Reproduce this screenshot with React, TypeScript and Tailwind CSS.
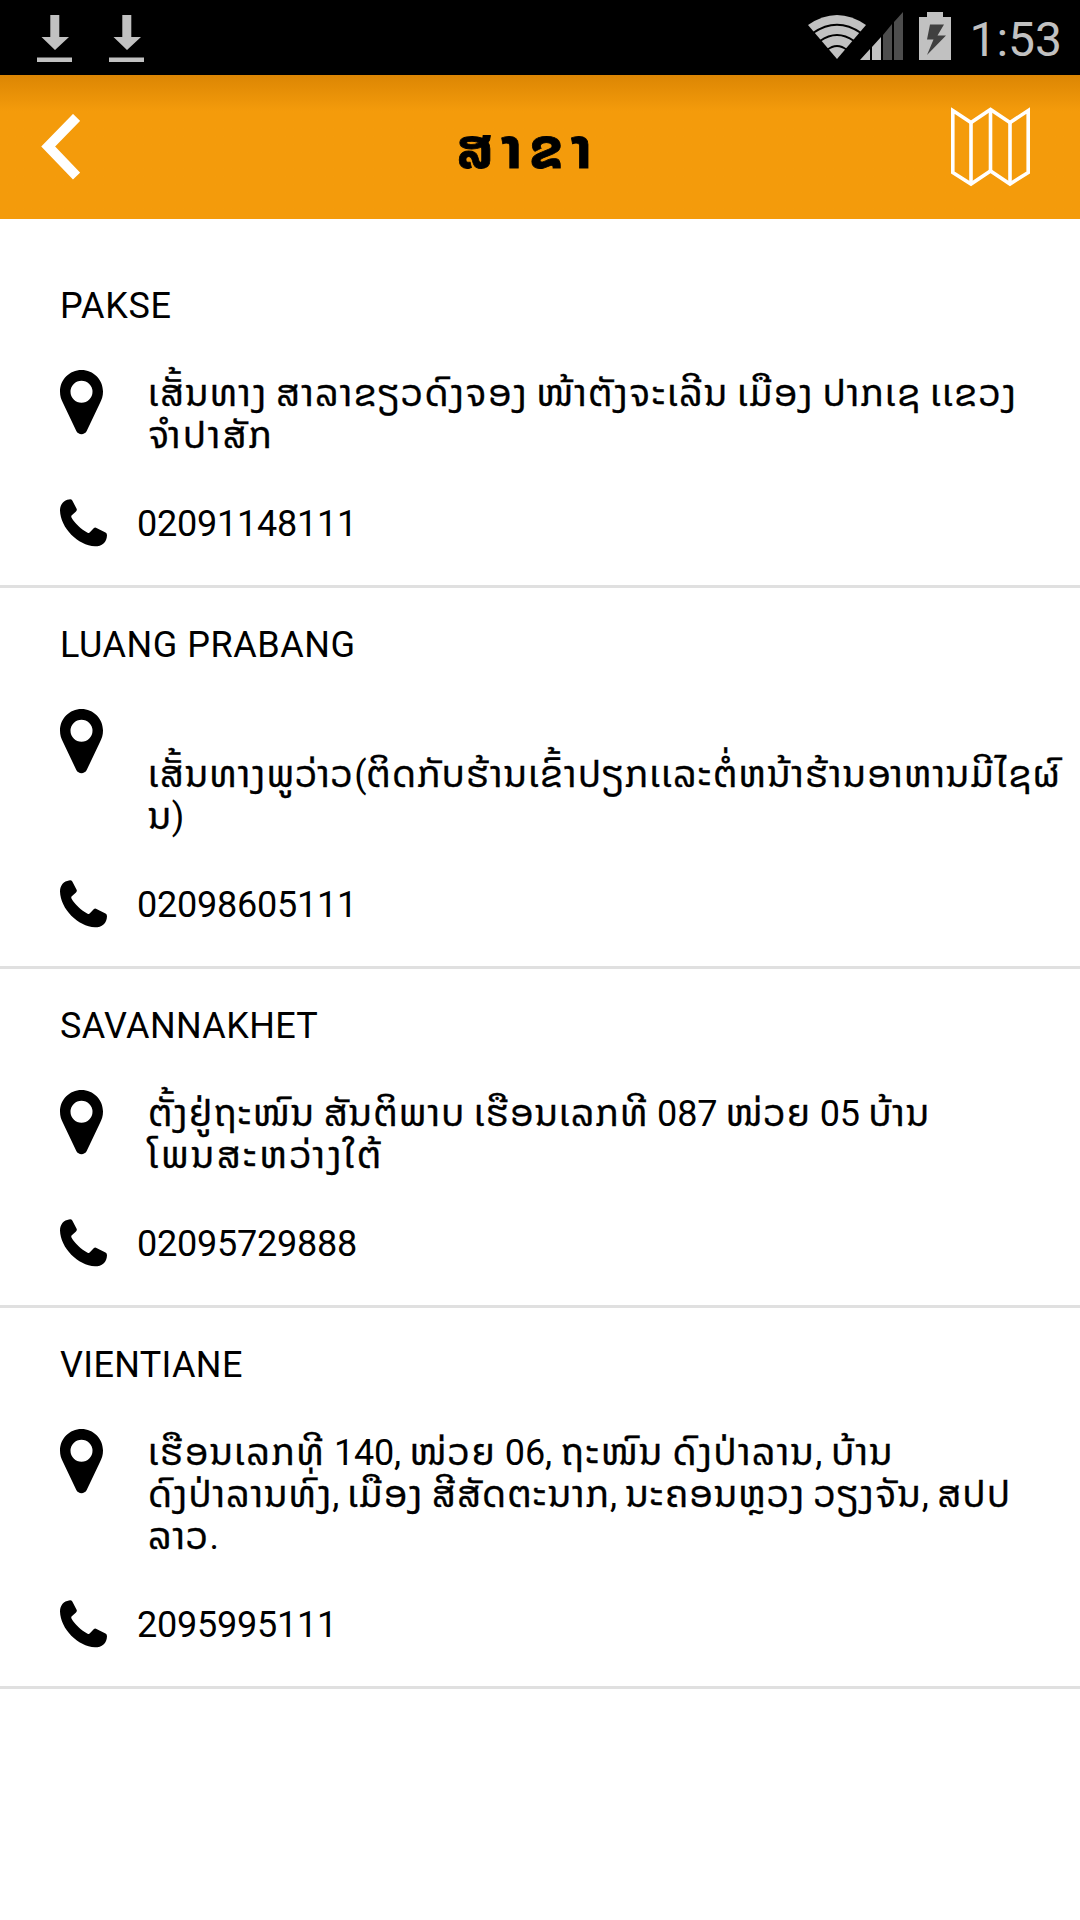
import { clsx } from "clsx";

type Line = { text: string; tracking?: string };

type Branch = {
  name: string;
  nameTracking: string;
  address: Line[];
  phone: string;
};

const branches: Branch[] = [
  {
    name: "PAKSE",
    nameTracking: "tracking-[0.7px]",
    address: [
      { text: "ເສັ້ນທາງ ສາລາຂຽວດົງຈອງ ໜ້າຕັງຈະເລີນ ເມືອງ ປາກເຊ ເເຂວງ", tracking: "tracking-[1.22px]" },
      { text: "ຈຳປາສັກ", tracking: "tracking-[2px]" },
    ],
    phone: "02091148111",
  },
  {
    name: "LUANG PRABANG",
    nameTracking: "tracking-[0.55px]",
    address: [
      { text: "" },
      { text: "ເສັ້ນທາງພູວ່າວ(ຕິດກັບຮ້ານເຂົ້າປຽກເເລະຕໍ່ຫນ້າຮ້ານອາຫານມີໄຊຜົ", tracking: "tracking-[1.06px]" },
      { text: "ນ)", tracking: "tracking-[0.5px]" },
    ],
    phone: "02098605111",
  },
  {
    name: "SAVANNAKHET",
    nameTracking: "tracking-[0.37px]",
    address: [
      { text: "ຕັ້ງຢູ່ຖະໜົນ ສັນຕິພາບ ເຮືອນເລກທີ 087 ໜ່ວຍ 05 ບ້ານ", tracking: "tracking-[1.05px]" },
      { text: "ໂພນສະຫວ່າງໃຕ້", tracking: "tracking-[2.3px]" },
    ],
    phone: "02095729888",
  },
  {
    name: "VIENTIANE",
    nameTracking: "tracking-[0.35px]",
    address: [
      { text: "ເຮືອນເລກທີ 140, ໜ່ວຍ 06, ຖະໜົນ ດົງປ່າລານ, ບ້ານ", tracking: "tracking-[1.35px]" },
      { text: "ດົງປ່າລານທົ່ງ, ເມືອງ ສີສັດຕະນາກ, ນະຄອນຫຼວງ ວຽງຈັນ, ສປປ", tracking: "tracking-[1.03px]" },
      { text: "ລາວ.", tracking: "tracking-[1px]" },
    ],
    phone: "2095995111",
  },
];

const DownloadIcon = () => (
  <svg width="36" height="48" viewBox="0 0 36 48" fill="#c1c1c1">
    <path d="M13.3 0H22.3V22H32L18 35L4.500 22H13.300Z" />
    <path d="M0 42.500H35V47H0Z" />
  </svg>
);

const WifiIcon = () => (
  <svg width="58" height="44" viewBox="0 0 58 44">
    <path d="M0 10Q29 -10 58 10L29 44Z" fill="#c1c1c1" />
    <g fill="none" stroke="#000" strokeWidth="2">
      <path d="M5 18Q29 1.500 53 18" />
      <path d="M12 26Q29 14 46 26" />
      <path d="M19 35Q29 27 39 35" />
    </g>
  </svg>
);

const SignalIcon = () => (
  <svg width="43" height="48" viewBox="0 0 43 48">
    <path d="M0 48L10 37V48ZM12 35L21 25V48H12Z" fill="#c1c1c1" />
    <path d="M23 23L32 12V48H23ZM34 10L43 0V48H34Z" fill="#4d4d4d" />
  </svg>
);

const BatteryIcon = () => (
  <svg width="32" height="48" viewBox="0 0 32 48">
    <path d="M8 0H24V5H32V48H0V5H8Z" fill="#c1c1c1" />
    <path d="M11 12.500H25L18.500 23.500H27L8 43L14.500 27.500H8Z" fill="#404040" />
  </svg>
);

const BackIcon = () => (
  <svg width="40" height="66" viewBox="0 0 40 66" fill="none" stroke="#fff" strokeWidth="10">
    <path d="M36.600 3.400L8.200 32.500L36.600 62.100" />
  </svg>
);

const MapIcon = () => (
  <svg width="79" height="80" viewBox="0 0 79 80" fill="none" stroke="#fff" strokeWidth="3.600">
    <path d="M1.800 3.500L20 15.500L39.500 2.500L59 15.500L77.200 3.500V65.500L59 77L39.500 64L20 77L1.800 65.500Z" />
    <path d="M20 15.500V77M39.500 2.500V64M59 15.500V77" />
  </svg>
);

const PinIcon = () => (
  <svg className="block" width="43" height="65" viewBox="0 0 43 65">
    <path
      fillRule="evenodd"
      d="M21.500 0C9.600 0 0 9.600 0 21.500C0 26 1.200 29.500 3 33L16.300 61C18.400 65.200 24.600 65.200 26.700 61L40 33C41.800 29.500 43 26 43 21.500C43 9.600 33.400 0 21.500 0ZM21.500 10.700A11 11 0 1 1 21.500 32.700A11 11 0 1 1 21.500 10.700Z"
    />
  </svg>
);

const PhoneIcon = () => (
  <svg className="block" width="47" height="48" viewBox="0 0 47 48">
    <path d="M9 .4Q11.300 -.2 12.300 1.500L16.600 9.800Q17.300 11.200 16 12.400L11.800 16.200Q10.800 17.200 11.600 18.800C15 24.500 21 30.200 27.600 33.700Q29 34.300 29.900 33.300L33.700 29.200Q35 28 36.500 28.900L45.500 33.600Q47 34.500 47 36.200C46.800 43.500 42 47.300 35 47.300C18 46.500 .5 29 0 11.500C0 5 4 1 9 .4Z" />
  </svg>
);

// Digits and punctuation stay at the list's size inside the larger Lao text
const AddressLine = ({ line }: { line: Line }) => (
  <p
    className={clsx(
      "h-[42px] text-[38px] leading-[42px] whitespace-nowrap [word-spacing:-2px] [-webkit-text-stroke:0.3px_#000]",
      line.tracking
    )}
  >
    {line.text.split(/([\d,().]+)/).map((part, i) =>
      /^[\d,().]+$/.test(part) ? (
        <span key={i} className="text-[36px] leading-none tracking-[-0.2px] [-webkit-text-stroke:0]">
          {part}
        </span>
      ) : (
        part
      )
    )}
  </p>
);

const StatusBar = () => (
  <div className="flex h-[75px] items-start bg-black pr-[18px] pl-[37px]">
    <div className="flex gap-9 pt-[15px]">
      <DownloadIcon />
      <DownloadIcon />
    </div>
    <div className="ml-auto flex">
      <div className="pt-[15px]">
        <WifiIcon />
      </div>
      <div className="-ml-[6px] pt-3">
        <SignalIcon />
      </div>
      <div className="ml-4 pt-3">
        <BatteryIcon />
      </div>
      <span className="ml-[18px] pt-[11px] text-[48px] leading-[58px] text-[#c1c1c1]">1:53</span>
    </div>
  </div>
);

const Header = () => (
  <header className="flex h-36 items-start bg-[#f49b0b] bg-linear-to-b from-[#dc8604] to-[#f49b0b] to-[36px] pr-[50px] pl-10">
    <div className="pt-[39px]">
      <BackIcon />
    </div>
    <h1 className="ml-[377px] pt-[42px] text-[56px] leading-[64px] font-bold tracking-[8px] whitespace-nowrap [-webkit-text-stroke:0.8px_#000]">
      ສາຂາ
    </h1>
    <div className="ml-auto pt-8">
      <MapIcon />
    </div>
  </header>
);

const BranchRow = ({ branch }: { branch: Branch }) => (
  <li className="border-b-[3px] border-[#e0e0e0] pt-9 pb-10 pl-[60px]">
    <h2 className={branch.nameTracking}>{branch.name}</h2>
    <div className="mt-[45px] flex items-start">
      <div className="-mt-[2px] w-[88px] shrink-0">
        <PinIcon />
      </div>
      <div>
        {branch.address.map((line, i) => (
          <AddressLine key={i} line={line} />
        ))}
      </div>
    </div>
    <div className="mt-[47px] flex h-[42px] items-start">
      <div className="-mt-1 w-[77px] shrink-0">
        <PhoneIcon />
      </div>
      <span className="tracking-[-0.22px]">{branch.phone}</span>
    </div>
  </li>
);

export default function App() {
  return (
    <div className="h-[1920px] w-[1080px] overflow-hidden bg-white font-[Roboto,'Noto_Sans_Lao','DejaVu_Sans',sans-serif] text-black">
      <StatusBar />
      <Header />
      <ul className="pt-[30px] text-[36px] leading-[42px]">
        {branches.map((branch) => (
          <BranchRow key={branch.name} branch={branch} />
        ))}
      </ul>
    </div>
  );
}
